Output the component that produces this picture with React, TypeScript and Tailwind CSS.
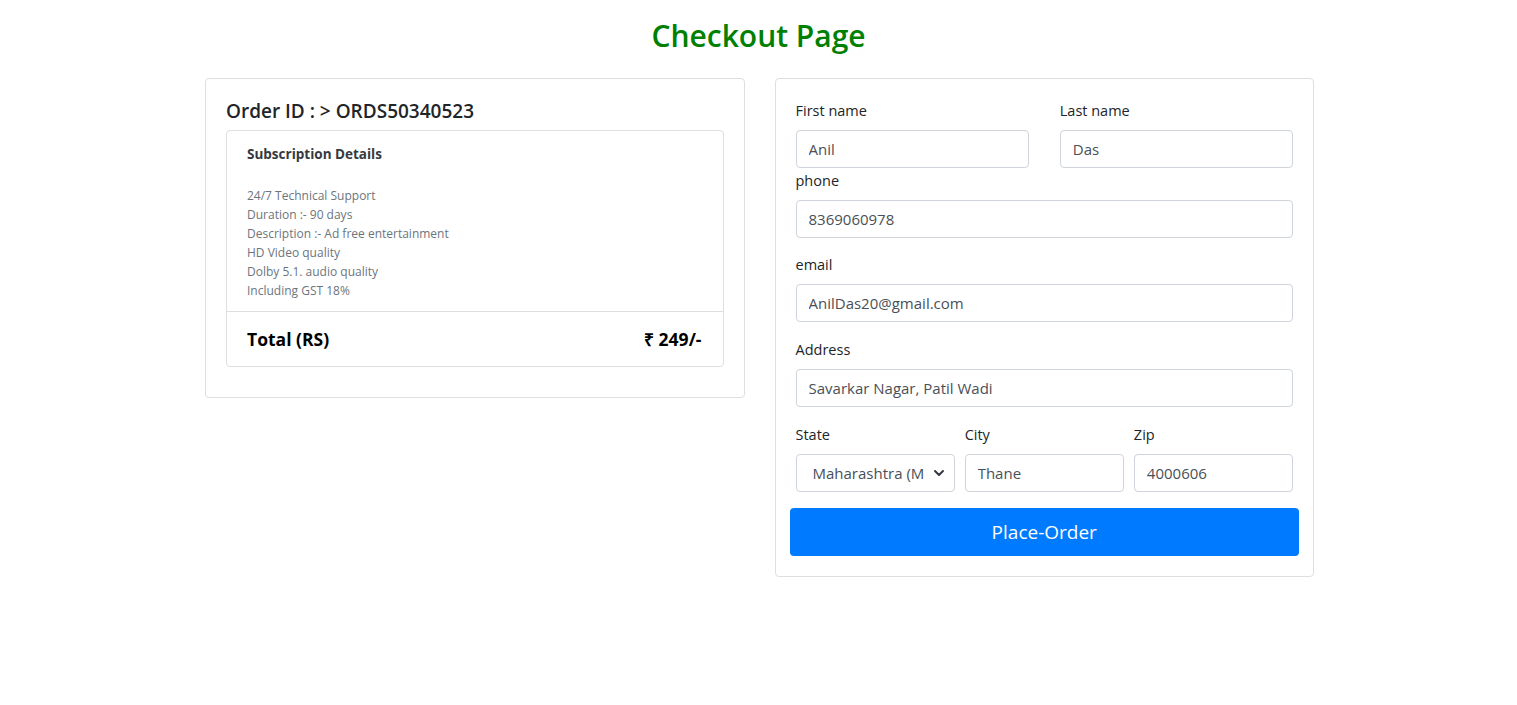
import { useState } from "react";

const FEATURES = [
  "24/7 Technical Support",
  "Duration :- 90 days",
  "Description :- Ad free entertainment",
  "HD Video quality",
  "Dolby 5.1. audio quality",
  "Including GST 18%",
];

const inputCls =
  "block w-full h-[38px] px-3 text-[15px] text-[#495057] bg-white border border-[#ced4da] rounded-[4px] outline-none";
const labelCls = "block text-[14.5px] leading-[22px] text-[#212529] mb-2";

function Field({ label, value, className = "" }: { label: string; value: string; className?: string }) {
  const [v, setV] = useState(value);
  return (
    <div className={className}>
      <label className={labelCls}>{label}</label>
      <input className={inputCls} value={v} onChange={(e) => setV(e.target.value)} />
    </div>
  );
}

export default function App() {
  const [state, setState] = useState("MH");

  return (
    <div className="min-h-screen bg-white font-['Open_Sans',sans-serif] pt-[17px]">
      <h2 className="text-center text-[30px] leading-[38px] font-semibold text-[#008000] mb-[23px]">
        Checkout Page
      </h2>

      <div className="w-[1111px] mx-auto pl-[2px] flex gap-[30px] items-start">
        {/* Order summary */}
        <div className="w-[540px] border border-[#dfdfdf] rounded-[4px] px-5 pt-5 pb-[30px]">
          <h5 className="text-[19px] leading-[24px] font-semibold text-[#212529] mb-[7px]">
            Order ID : &gt; ORDS50340523
          </h5>
          <div className="border border-[#dfdfdf] rounded-[4px]">
            <div className="px-5 pt-[13px] pb-[11px]">
              <h6 className="text-[13.5px] leading-[20px] font-bold text-[#343a40] mb-[22px]">
                Subscription Details
              </h6>
              <ul>
                {FEATURES.map((f) => (
                  <li key={f} className="text-[12px] leading-[19px] text-[#6c757d]">
                    {f}
                  </li>
                ))}
              </ul>
            </div>
            <div className="border-t border-[#dfdfdf] h-[55px] pl-5 pr-[21px] flex items-center justify-between">
              <span className="text-[17.5px] font-bold text-black">Total (RS)</span>
              <span className="text-[17.5px] font-bold text-black">₹ 249/-</span>
            </div>
          </div>
        </div>

        {/* Billing form */}
        <div className="w-[540px] border border-[#dfdfdf] rounded-[4px] px-5 pt-[21px] pb-5">
          <div className="grid grid-cols-2 gap-x-[31px]">
            <Field label="First name" value="Anil" />
            <Field label="Last name" value="Das" />
          </div>
          <Field label="phone" value="8369060978" className="mt-[2px]" />
          <Field label="email" value="AnilDas20@gmail.com" className="mt-4" />
          <Field label="Address" value="Savarkar Nagar, Patil Wadi" className="mt-[17px]" />

          <div className="grid grid-cols-3 gap-x-[10px] mt-[17px]">
            <div>
              <label className={labelCls}>State</label>
              <div className="relative">
                <select
                  value={state}
                  onChange={(e) => setState(e.target.value)}
                  className="block w-full h-[38px] pl-4 pr-[30px] text-[15px] text-[#495057] bg-white border border-[#ced4da] rounded-[4px] outline-none appearance-none"
                >
                  <option value="MH">Maharashtra (Mumbai)</option>
                  <option value="GJ">Gujarat</option>
                  <option value="KA">Karnataka</option>
                </select>
                <svg
                  className="absolute right-[10px] top-1/2 -translate-y-1/2 pointer-events-none"
                  width="12"
                  height="12"
                  viewBox="0 0 12 12"
                  fill="none"
                >
                  <path d="M2 4l4 4 4-4" stroke="#343a40" strokeWidth="2" strokeLinecap="round" strokeLinejoin="round" />
                </svg>
              </div>
            </div>
            <Field label="City" value="Thane" />
            <Field label="Zip" value="4000606" />
          </div>

          <button className="block w-[calc(100%+12px)] -mx-[6px] mt-4 h-[48px] rounded-[4px] bg-[#007bff] text-white text-[19px]">
            Place-Order
          </button>
        </div>
      </div>
    </div>
  );
}
